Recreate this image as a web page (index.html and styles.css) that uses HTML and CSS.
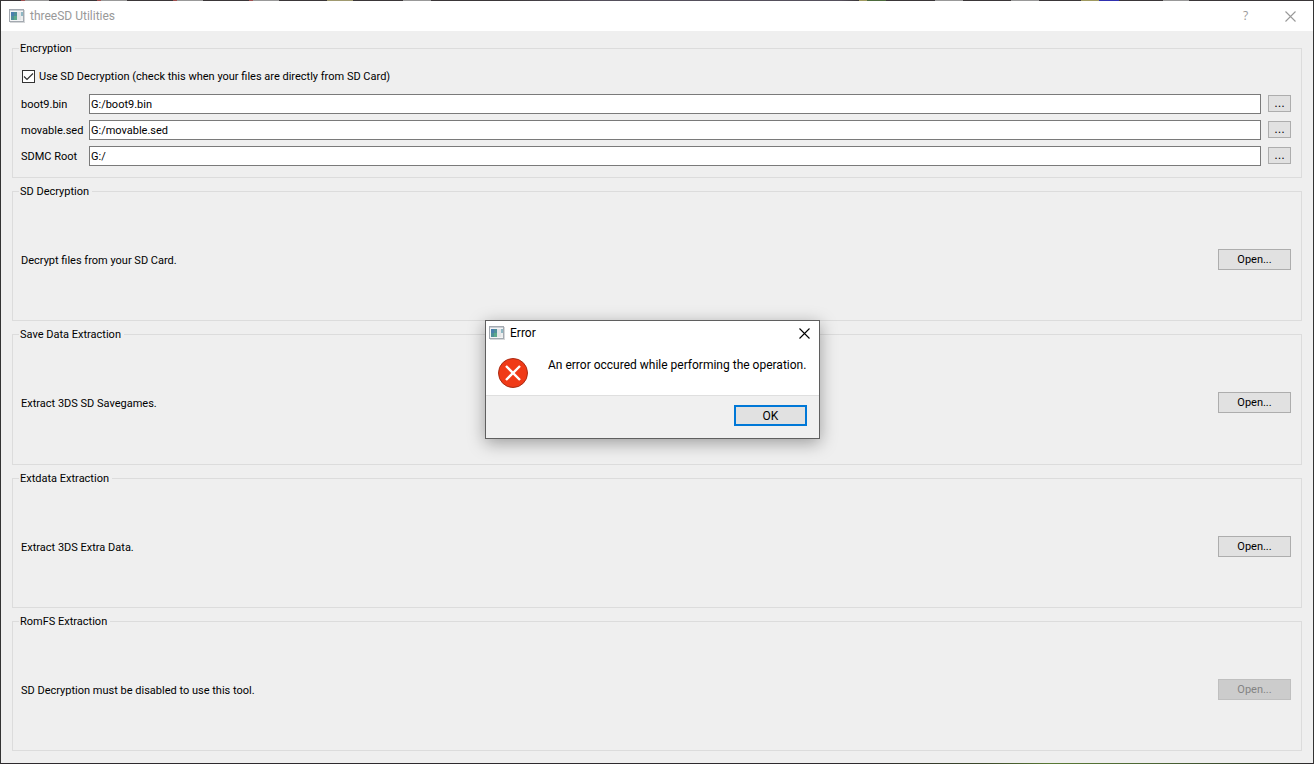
FILE: index.html
```html
<!DOCTYPE html>
<html lang="en">
<head>
<meta charset="utf-8">
<title>threeSD Utilities</title>
<link rel="stylesheet" href="styles.css">
</head>
<body>
<svg class="defs" aria-hidden="true">
  <defs>
    <symbol id="app" viewBox="0 0 16 14">
      <rect x="0.5" y="0.5" width="14" height="12" fill="#f4f5f6" stroke="#a3a9b0"/>
      <rect x="1" y="1" width="13" height="1" fill="#c9ced4"/>
      <rect x="2" y="3" width="6" height="8" fill="#4f8f98"/>
      <rect x="2" y="3" width="3" height="4" fill="#4a7fae"/>
      <rect x="5" y="7" width="3" height="4" fill="#5ca98a"/>
      <rect x="8" y="3" width="4" height="8" fill="#e3e5e7"/>
      <rect x="12" y="3" width="2" height="4" fill="#8fb8c4"/>
      <rect x="12" y="7" width="2" height="4" fill="#eceeee"/>
      <rect x="15" y="1" width="1" height="13" fill="#d5d7d9"/>
      <rect x="1" y="13" width="14" height="1" fill="#d5d7d9"/>
    </symbol>
    <symbol id="close" viewBox="0 0 11 11">
      <path d="M0.5 0.5 10.5 10.5M10.5 0.5 0.5 10.5" fill="none" stroke="currentColor" stroke-width="1.1"/>
    </symbol>
  </defs>
</svg>
<main class="window">
  <div class="edge edge-top"></div>
  <header class="titlebar">
    <svg class="app-icon"><use href="#app"/></svg>
    <h1 class="title">threeSD Utilities</h1>
    <button class="caption-button" type="button" aria-label="Help">?</button>
    <button class="caption-button" type="button" aria-label="Close"><svg class="close-icon"><use href="#close"/></svg></button>
  </header>
  <form class="content">
    <fieldset class="group">
      <legend>Encryption</legend>
      <div class="settings">
        <label class="check"><input type="checkbox" checked>Use SD Decryption (check this when your files are directly from SD Card)</label>
        <label for="boot9">boot9.bin</label>
        <input class="path" id="boot9" type="text" value="G:/boot9.bin">
        <button class="browse" type="button" aria-label="Browse for boot9.bin">...</button>
        <label for="movable">movable.sed</label>
        <input class="path" id="movable" type="text" value="G:/movable.sed">
        <button class="browse" type="button" aria-label="Browse for movable.sed">...</button>
        <label for="sdmc">SDMC Root</label>
        <input class="path" id="sdmc" type="text" value="G:/">
        <button class="browse" type="button" aria-label="Browse for SDMC root">...</button>
      </div>
    </fieldset>
    <fieldset class="group">
      <legend>SD Decryption</legend>
      <div class="tool"><span>Decrypt files from your SD Card.</span><button class="button" type="button">Open...</button></div>
    </fieldset>
    <fieldset class="group">
      <legend>Save Data Extraction</legend>
      <div class="tool"><span>Extract 3DS SD Savegames.</span><button class="button" type="button">Open...</button></div>
    </fieldset>
    <fieldset class="group">
      <legend>Extdata Extraction</legend>
      <div class="tool"><span>Extract 3DS Extra Data.</span><button class="button" type="button">Open...</button></div>
    </fieldset>
    <fieldset class="group">
      <legend>RomFS Extraction</legend>
      <div class="tool"><span>SD Decryption must be disabled to use this tool.</span><button class="button" type="button" disabled>Open...</button></div>
    </fieldset>
  </form>
  <div class="edge edge-bottom"></div>
</main>
<section class="dialog" role="alertdialog" aria-labelledby="error-title" aria-describedby="error-text">
  <header class="dialog-title">
    <svg class="app-icon"><use href="#app"/></svg>
    <h2 class="title" id="error-title">Error</h2>
    <button class="dialog-close" type="button" aria-label="Close"><svg class="close-icon"><use href="#close"/></svg></button>
  </header>
  <div class="dialog-body">
    <svg class="error-icon" viewBox="0 0 30 30" aria-hidden="true">
      <circle cx="15" cy="15" r="14.5" fill="#f03a17" stroke="#a92c14"/>
      <path d="M8 8 22 22M22 8 8 22" stroke="#fff" stroke-width="2.4" fill="none"/>
    </svg>
    <p class="message" id="error-text">An error occured while performing the operation.</p>
  </div>
  <footer class="dialog-footer"><button class="button default" type="button">OK</button></footer>
</section>
</body>
</html>
```
FILE: styles.css
```css
* { box-sizing: border-box; }

body {
  margin: 0;
  color: #000;
  background: #efefef;
  font: 11px/15px Roboto, "Noto Sans", sans-serif;
}

button, input { font: inherit; color: inherit; }
button { padding: 0; border: 0; background: none; }
.defs { position: absolute; width: 0; height: 0; }

.window {
  display: flex;
  flex-direction: column;
  min-height: 100vh;
  border: solid #333;
  border-width: 0 1px;
}

/* Desktop colours showing through the translucent window edge */
.edge { height: 1px; }
.edge-top {
  background: linear-gradient(90deg,
    #3a3638 0 20px, #a05050 20px 24px, #999 24px 48px, #3a3638 48px 96px,
    #a05050 96px 100px, #999 100px 126px, #3a3638 126px 172px,
    #a05050 172px 176px, #999 176px 202px, #3a3638 202px 248px,
    #a05050 248px 252px, #999 252px 278px, #3a3638 278px 326px,
    #a09a70 326px 352px, #3a3638 352px 402px, #999 402px 430px,
    #3a3638 430px 500px, #55505c 600px 840px, #3a3638 858px,
    #a09a60 858px 866px, #4c6a3c 866px 885px, #3a3638 885px 934px,
    #999 934px 962px, #3a3638 962px 1010px, #999 1010px 1038px,
    #3a3638 1038px 1080px, #a09a60 1080px 1098px, #3030b0 1098px 1118px,
    #3a3638 1118px 1162px, #999 1162px 1188px, #3a3638 1188px);
}
.edge-bottom {
  background: linear-gradient(90deg, #2e2a2e 0 66%, #3d4a2c 75%, #5a7a35 80%, #4c6535 88%, #34402c 96%, #2e2a2e);
}

.titlebar {
  display: flex;
  align-items: center;
  height: 30px;
  padding-left: 8px;
  background: #fff;
  color: #999;
}

.title {
  flex: 1;
  margin: 0;
  font: 12px/16px Roboto, "Noto Sans", sans-serif;
}

.app-icon { flex: none; width: 16px; height: 14px; margin-right: 5px; }
.caption-button {
  display: grid;
  place-items: center;
  width: 45px;
  height: 30px;
  font: 12px/16px "Open Sans", sans-serif;
}
.close-icon { width: 11px; height: 11px; }

.content {
  flex: 1;
  display: grid;
  grid-auto-rows: 1fr;
  gap: 6px;
  padding: 10px 11px 12px;
}

.group {
  min-width: 0;
  margin: 0;
  padding: 0 10px 0 8px;
  border: 1px solid #dcdcdc;
}
.group legend { height: 15px; margin-left: -2px; padding: 0 3px 0 1px; }

.settings {
  display: grid;
  grid-template-columns: 61px 1fr 23px;
  gap: 6px 7px;
  align-items: center;
  padding-top: 10px;
}
.settings label { white-space: nowrap; }
.settings .check {
  grid-column: 1 / -1;
  display: flex;
  align-items: center;
  gap: 4px;
  height: 20px;
  margin-bottom: 2px;
}
.check input {
  appearance: none;
  width: 13px;
  height: 13px;
  margin: 0 0 0 1px;
  border: 1px solid #333;
  background: #fff url("data:image/svg+xml,%3Csvg xmlns='http://www.w3.org/2000/svg' viewBox='0 0 11 11'%3E%3Cpath d='M1 5.5 4 8.5 10 2.5' fill='none' stroke='%23333' stroke-width='1.2'/%3E%3C/svg%3E");
}
.path {
  width: 100%;
  height: 20px;
  padding: 1px 1px 0;
  border: 1px solid #7a7a7a;
  background: #fff;
}
.browse {
  height: 17px;
  margin-bottom: 2px;
  border: 1px solid #adadad;
  background: #e1e1e1;
  font: 11px/15px "DejaVu Sans", sans-serif;
}

.tool {
  display: flex;
  align-items: center;
  justify-content: space-between;
  height: 100%;
}
.tool span { padding-top: 2px; }
.button {
  width: 73px;
  height: 21px;
  border: 1px solid #adadad;
  background: #e1e1e1;
}
.button:disabled { border-color: #bfbfbf; background: #ccc; color: #838383; }

.dialog {
  position: absolute;
  left: 485px;
  top: 320px;
  width: 335px;
  border: 1px solid #5f5f5f;
  background: #fff;
  box-shadow: 0 4px 16px rgba(0, 0, 0, 0.35);
  font: 12px/16px Roboto, "Noto Sans", sans-serif;
}
.dialog-title { display: flex; align-items: center; height: 24px; padding-left: 3px; }
.dialog-close { display: grid; place-items: center; width: 30px; height: 24px; }
.dialog-body { display: flex; gap: 20px; height: 50px; padding: 12px 0 0 12px; }
.error-icon { flex: none; width: 30px; height: 30px; margin-top: 1px; }
.message { margin: 0; white-space: nowrap; }
.dialog-footer {
  display: flex;
  justify-content: flex-end;
  height: 43px;
  padding: 9px 12px;
  border-top: 1px solid #dfdfdf;
  background: #f0f0f0;
}
.default { border: 2px solid #0078d7; line-height: 16px; }
```
